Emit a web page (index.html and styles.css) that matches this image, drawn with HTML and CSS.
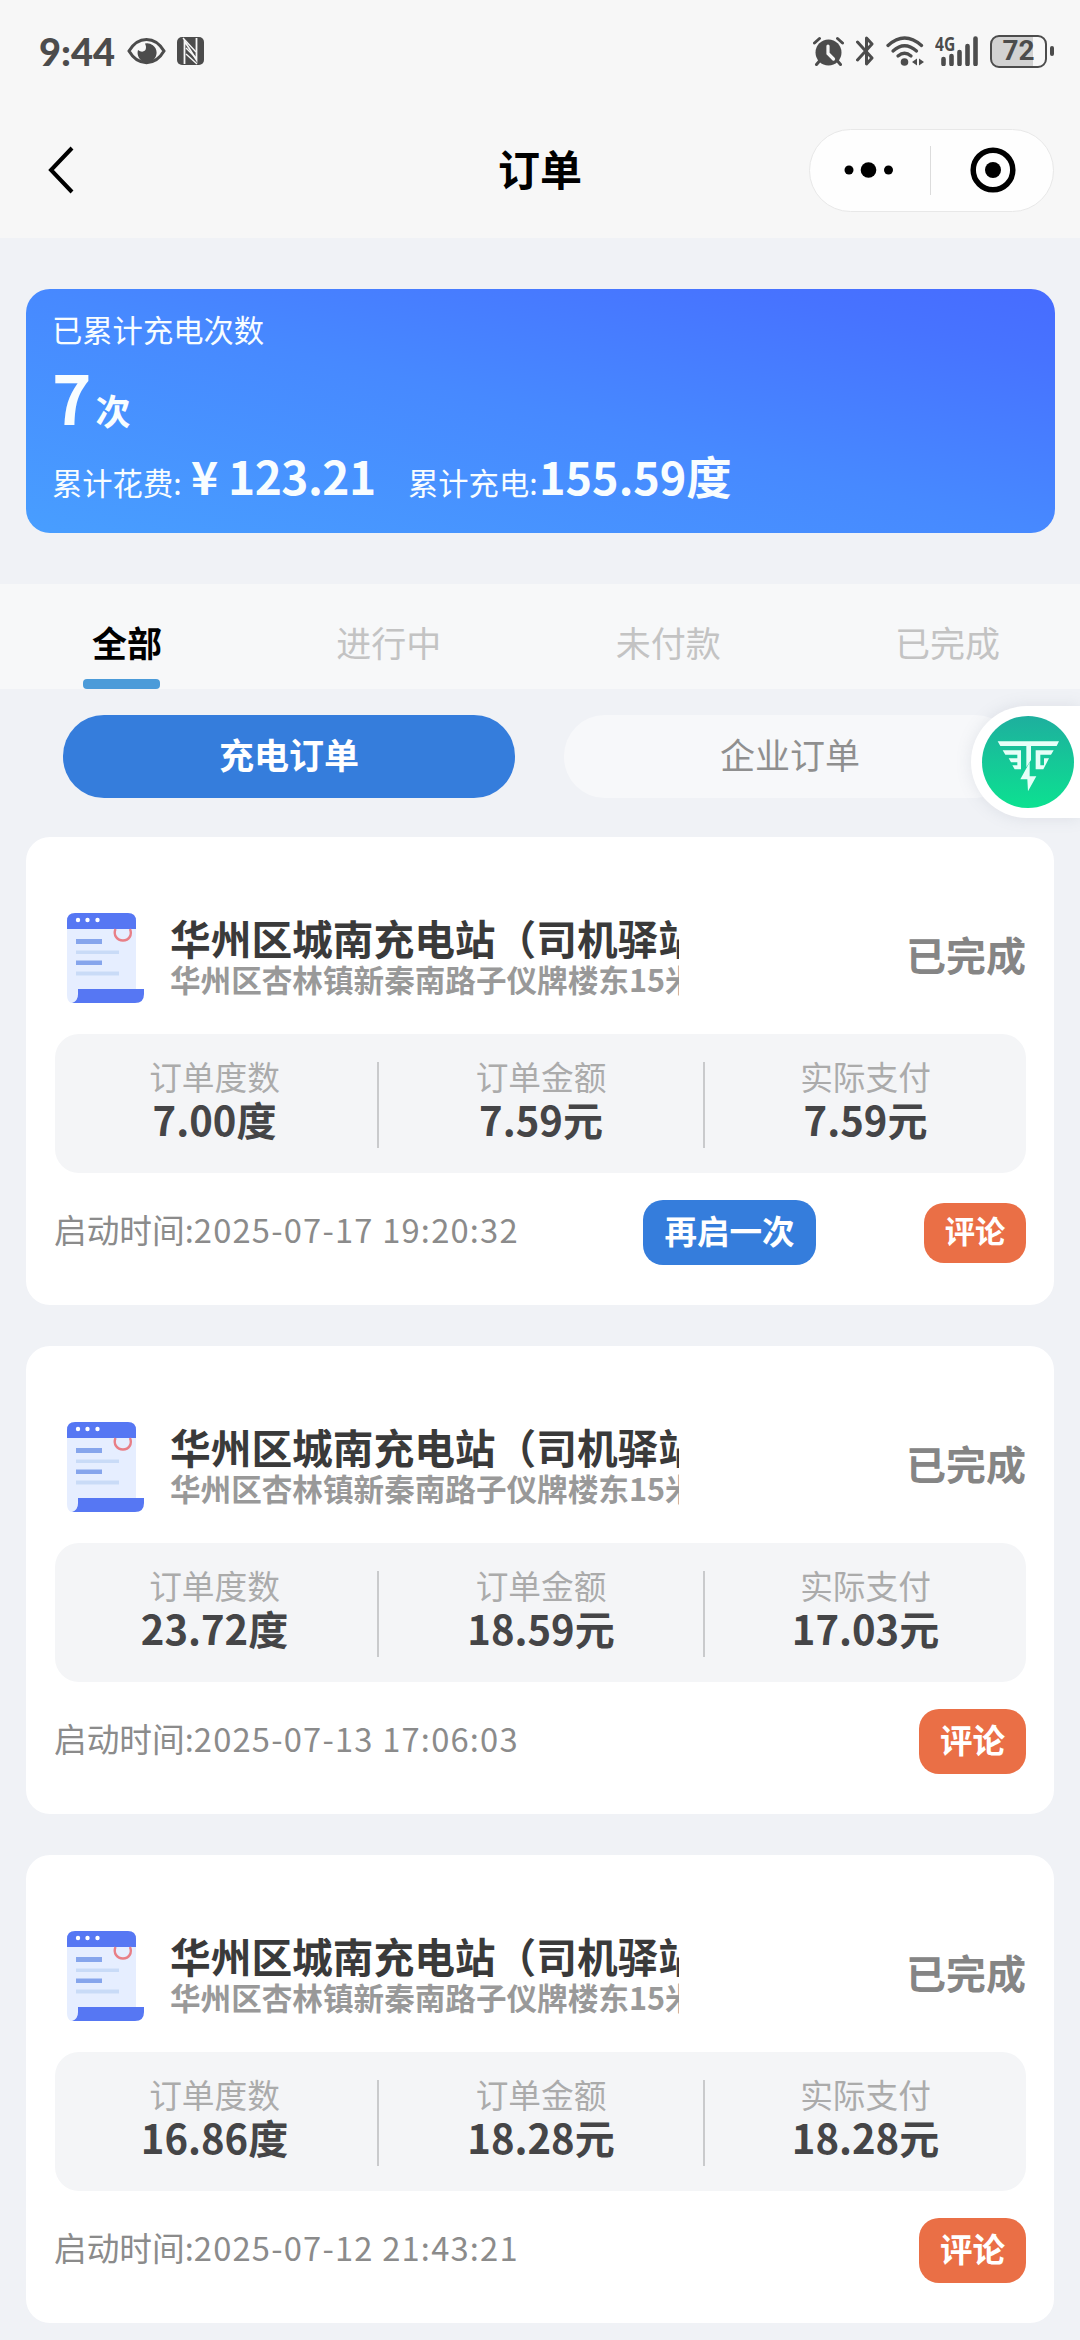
FILE: index.html
```html
<!DOCTYPE html>
<html lang="zh-CN">
<head>
<meta charset="utf-8">
<title>订单</title>
<link rel="stylesheet" href="styles.css">
</head>
<body>
<svg class="defs" aria-hidden="true">
  <symbol id="order-icon" viewBox="0 0 77 90">
    <path d="M0 14H69V78H11Q11 90 4 90Q0 88 0 82Z" fill="#e6eeff"/>
    <path d="M8 0H61Q69 0 69 8V16H0V8Q0 0 8 0Z" fill="#5677f3"/>
    <circle cx="11" cy="7" r="2.2" fill="#fff"/><circle cx="20.500" cy="7" r="2.200" fill="#fff"/><circle cx="30.500" cy="7" r="2.200" fill="#fff"/>
    <path d="M48.500 16C46 22 50 27.500 56 27.500S65.500 22 63 16" fill="none" stroke="#e87f87" stroke-width="2.400"/>
    <path d="M9 26H35V31H9ZM9 47.500H35V52H9Z" fill="#86a5ec"/>
    <path d="M9 37.500H52V41H9ZM9 58.500H52V62.500H9Z" fill="#c9dbf7"/>
    <path d="M11 76H77V81Q77 90 68 90H5Q11 88 11 81Z" fill="#5677f3"/>
  </symbol>
</svg>

<header class="header">
  <div class="status">
    <div class="status-left">
      <span class="time">9:44</span>
      <svg class="eye" viewBox="0 0 39 28"><path d="M2 14C11 -1.500 28 -1.500 37 14C28 29.500 11 29.500 2 14Z" fill="none" stroke="#4c4c4c" stroke-width="3"/><path d="M18 6.500A9.500 9.500 0 1 1 11 13Q15 16 18 13.500Q20 11 18 6.500Z" fill="#4c4c4c"/></svg>
      <svg class="nfc" viewBox="0 0 28 28"><rect width="27" height="28" rx="5" fill="#4c4c4c"/><path d="M7.500 27V4L19.500 23V1" fill="none" stroke="#f7f7f7" stroke-width="1.800"/><path d="M6 1L19 15M9 11L19 21M9 17L20 27" stroke="#f7f7f7" stroke-width="1.400"/></svg>
    </div>
    <div class="status-right">
      <svg class="alarm" viewBox="0 0 31 30"><circle cx="15.500" cy="16.500" r="13" fill="#4c4c4c"/><path d="M1.500 7L6.500 2.500M29.500 7L24.500 2.500M6.500 25L3.500 28.500M24.500 25L27.500 28.500" stroke="#4c4c4c" stroke-width="3" stroke-linecap="round"/><path d="M15 10V17.500L20.500 23" fill="none" stroke="#f7f7f7" stroke-width="3.200" stroke-linecap="round"/></svg>
      <svg class="bt" viewBox="0 0 18 30"><path d="M1.500 6L16 22L10.500 28V2L16 8L1.500 24" fill="none" stroke="#4c4c4c" stroke-width="3" stroke-linecap="round" stroke-linejoin="round"/></svg>
      <svg class="wifi" viewBox="0 0 38 30"><g fill="none" stroke="#4c4c4c" stroke-width="3.300" stroke-linecap="round"><path d="M2 9.500Q18.500 -5.500 35.500 9.500"/><path d="M7 15Q18.500 4.500 30.500 15"/><path d="M12 20Q18.500 14.500 25 20"/></g><circle cx="18.500" cy="26" r="3.800" fill="#4c4c4c"/><path d="M26 26L31 22.500V29.500ZM38 26L33 22.500V29.500Z" fill="#4c4c4c"/></svg>
      <span class="signal"><span class="net">4G</span><svg viewBox="0 0 40 30"><path d="M4.500 23V28M12.500 20V28M20.500 16V28M28.500 10V28M36.500 2.500V28" stroke="#4c4c4c" stroke-width="4.600" stroke-linecap="round"/></svg></span>
      <span class="battery"><span class="level">72</span><i class="nub"></i></span>
    </div>
  </div>
  <nav class="nav">
    <svg class="back" viewBox="0 0 26 48"><path d="M24 2L3 24L24 46" fill="none" stroke="#000" stroke-width="4"/></svg>
    <h1 class="title">订单</h1>
    <div class="capsule">
      <svg class="dots" viewBox="0 0 50 16"><circle cx="5" cy="8" r="4.500"/><circle cx="24.500" cy="8" r="7.800"/><circle cx="44.500" cy="8" r="4.500"/></svg>
      <i class="bar"></i>
      <svg class="target" viewBox="0 0 46 46"><circle cx="23" cy="23" r="19.800" fill="none" stroke="#000" stroke-width="5.500"/><circle cx="23" cy="23" r="8"/></svg>
    </div>
  </nav>
</header>

<section class="summary">
  <p class="s-label">已累计充电次数</p>
  <p class="s-count">7<span>次</span></p>
  <p class="s-totals"><span class="s-key">累计花费:</span><b class="s-yen">¥</b><b class="s-cost">123.21</b><span class="s-key">累计充电:</span><b class="s-power">155.59度</b></p>
</section>

<div class="tabs">
  <span class="tab active">全部</span><span class="tab">进行中</span><span class="tab">未付款</span><span class="tab">已完成</span>
</div>

<div class="types">
  <span class="type on">充电订单</span><span class="type">企业订单</span>
  <div class="float">
    <svg viewBox="0 0 276 276">
      <defs><linearGradient id="g" x1="0" y1="0" x2="0" y2="1"><stop offset="0" stop-color="#1eaf9e"/><stop offset="1" stop-color="#0ce191"/></linearGradient></defs>
      <circle cx="138" cy="138" r="138" fill="url(#g)"/>
      <g fill="#e6fff8"><path d="M47 76H231L224 90H147V132L133 154V90H55Z"/><path d="M62 103H117V160H98L91 148H106V139H87L80 127H106V116H70Z"/><path d="M161 103H215L207 116H175V148H186V127H201L184 160H161Z"/><path d="M143 139L115 190H136L138 226L163 181H143Z"/></g>
    </svg>
  </div>
</div>

<main class="orders">
  <article class="card">
    <div class="top">
      <svg class="doc"><use href="#order-icon"/></svg>
      <div class="place"><h2>华州区城南充电站（司机驿站）</h2><p>华州区杏林镇新秦南路子仪牌楼东15米</p></div>
      <span class="state">已完成</span>
    </div>
    <div class="stats">
      <div class="stat"><span>订单度数</span><b>7.00度</b></div>
      <div class="stat"><span>订单金额</span><b>7.59元</b></div>
      <div class="stat"><span>实际支付</span><b>7.59元</b></div>
    </div>
    <div class="foot"><span class="start">启动时间:<time>2025-07-17 19:20:32</time></span><span class="btn again">再启一次</span><span class="btn review small">评论</span></div>
  </article>
  <article class="card">
    <div class="top">
      <svg class="doc"><use href="#order-icon"/></svg>
      <div class="place"><h2>华州区城南充电站（司机驿站）</h2><p>华州区杏林镇新秦南路子仪牌楼东15米</p></div>
      <span class="state">已完成</span>
    </div>
    <div class="stats">
      <div class="stat"><span>订单度数</span><b>23.72度</b></div>
      <div class="stat"><span>订单金额</span><b>18.59元</b></div>
      <div class="stat"><span>实际支付</span><b>17.03元</b></div>
    </div>
    <div class="foot"><span class="start">启动时间:<time>2025-07-13 17:06:03</time></span><span class="btn review">评论</span></div>
  </article>
  <article class="card">
    <div class="top">
      <svg class="doc"><use href="#order-icon"/></svg>
      <div class="place"><h2>华州区城南充电站（司机驿站）</h2><p>华州区杏林镇新秦南路子仪牌楼东15米</p></div>
      <span class="state">已完成</span>
    </div>
    <div class="stats">
      <div class="stat"><span>订单度数</span><b>16.86度</b></div>
      <div class="stat"><span>订单金额</span><b>18.28元</b></div>
      <div class="stat"><span>实际支付</span><b>18.28元</b></div>
    </div>
    <div class="foot"><span class="start">启动时间:<time>2025-07-12 21:43:21</time></span><span class="btn review">评论</span></div>
  </article>
</main>
</body>
</html>
```
FILE: styles.css
```css
* { box-sizing: border-box; margin: 0; padding: 0; }
body {
  width: 1080px;
  height: 2340px;
  overflow: hidden;
  background: #f0f2f6;
  font-family: "Noto Sans CJK SC", sans-serif;
}
svg { display: block; flex: none; }
.defs { position: absolute; width: 0; height: 0; }

/* Header */
.header { height: 238px; background: #f7f7f7; }
.status {
  height: 102px;
  padding: 0 26px 0 39px;
  display: flex;
  justify-content: space-between;
  align-items: center;
  color: #4c4c4c;
}
.status-left, .status-right { display: flex; align-items: center; }
.time { width: 88px; font: 900 38px/44px Lato, sans-serif; letter-spacing: 0; }
.eye { width: 39px; height: 28px; margin-right: 11px; }
.nfc { width: 28px; height: 28px; }
.alarm { width: 31px; height: 30px; margin-right: 12px; }
.bt { width: 18px; height: 30px; margin-right: 12px; }
.wifi { width: 38px; height: 30px; margin-right: 11px; }
.signal { display: flex; position: relative; width: 44px; margin-right: 11px; justify-content: flex-end; }
.signal svg { width: 40px; height: 30px; }
.net { position: absolute; left: 0; top: -2px; font: 700 19px/20px "Open Sans", sans-serif; transform: scaleX(.82); transform-origin: left; }
.battery { display: flex; align-items: center; gap: 3px; }
.level {
  width: 57px;
  height: 33px;
  border: 2px solid #4c4c4c;
  border-radius: 9px;
  background: linear-gradient(90deg, #d2d2d2 78%, #f7f7f7 78%);
  font: 700 28px/28px Roboto, sans-serif;
  text-align: center;
}
.nub { width: 4px; height: 10px; border-radius: 2px; background: #4c4c4c; }

.nav { height: 136px; display: grid; grid-template-columns: 1fr auto 1fr; align-items: center; padding: 0 26px 0 48px; }
.back { width: 26px; height: 48px; }
.title { font-size: 42px; line-height: 60px; font-weight: 700; margin-left: -22px; transform: translateY(-2px); }
.capsule {
  justify-self: end;
  width: 245px;
  height: 83px;
  border: 1px solid #e8e8e8;
  border-radius: 42px;
  background: #fefefe;
  display: flex;
  align-items: center;
}
.dots { width: 50px; height: 16px; margin: 0 36px 0 34px; }
.bar { width: 1px; height: 49px; background: #dcdcdc; }
.target { width: 46px; height: 46px; margin-left: 39px; }

/* Summary */
.summary {
  height: 244px;
  margin: 51px 25px 0 26px;
  padding: 19px 26px;
  border-radius: 24px;
  background: linear-gradient(to top right, #489eff 0%, #4789ff 50%, #4773ff 85%, #476cff 100%);
  color: #f8fdff;
}
.s-label { font-size: 30.300px; line-height: 42px; }
.s-count { font-size: 67px; line-height: 92px; font-weight: 700; }
.s-count span { font-size: 35px; margin-left: 4px; }
.s-totals { display: flex; align-items: baseline; margin-top: -14px; font-size: 46px; line-height: 66px; }
.s-key { font-size: 30.300px; width: 139px; white-space: nowrap; }
.s-yen { width: 37px; }
.s-cost { width: 180px; letter-spacing: -0.5px; }
.s-cost + .s-key { width: 131px; }
.s-power { white-space: nowrap; font-size: 45px; }

/* Tabs */
.tabs {
  height: 105px;
  margin-top: 51px;
  padding: 0 80px 0 92px;
  display: flex;
  justify-content: space-between;
  background: #f7f8f9;
}
.tab { position: relative; font-size: 35px; line-height: 116px; color: #c3c3c3; }
.active { color: #000; font-weight: 700; }
.active::after { content: ""; position: absolute; left: -9px; bottom: 0; width: 77px; height: 10px; border-radius: 4px; background: #4b9bd9; }

.types { position: relative; height: 83px; margin: 26px 64px 0 63px; display: flex; gap: 49px; }
.type { flex: 1; border-radius: 41px; background: #f7f8fa; color: #8f8f8f; font-size: 35px; line-height: 78px; text-align: center; }
.on { background: #357ddc; color: #fff; font-weight: 700; }
.float {
  position: absolute;
  right: -64px;
  top: -9px;
  width: 109px;
  height: 112px;
  padding: 10px 11px;
  border-radius: 56px 0 0 56px;
  background: #fff;
  box-shadow: 0 0 16px rgba(120, 130, 150, .16);
}
.float svg { width: 92px; height: 92px; }

/* Orders */
.orders { margin: 39px 26px 0; display: flex; flex-direction: column; gap: 41px; }
.card { height: 468px; padding: 76px 28px 0 29px; border-radius: 24px; background: #fff; }
.top { display: flex; height: 121px; }
.doc { width: 77px; height: 90px; margin: 0 26px 0 12px; }
.place { width: 509px; padding-top: 1px; overflow: hidden; white-space: nowrap; }
.place h2 { font-size: 40.700px; line-height: 48px; font-weight: 700; color: #3a3a3a; }
.place p { font-size: 30.600px; line-height: 38px; font-weight: 700; color: #999; margin-top: -2px; }
.state { margin-left: auto; font-size: 40px; line-height: 82px; font-weight: 700; color: #858585; }
.stats { height: 139px; padding: 28px 0 30px; border-radius: 24px; background: #f4f5f7; display: grid; grid-template-columns: 322px 326px 1fr; }
.stat { display: flex; flex-direction: column; align-items: center; border-left: 2px solid #c9cacc; }
.stat:first-child { border-left: 0; padding-right: 3px; }
.stat span { font-size: 32.700px; line-height: 28px; color: #ababab; }
.stat b { font-size: 40px; line-height: 58px; color: #454547; }
.foot { height: 65px; margin-top: 27px; display: flex; align-items: center; }
.start { flex: 1; margin-left: -1px; font-size: 32.700px; line-height: 56px; color: #8b8b8b; transform: translateY(-4px); }
.start time { letter-spacing: 1.200px; }
.btn { height: 65px; border-radius: 20px; font-size: 32.500px; line-height: 59px; font-weight: 700; text-align: center; color: #fff; }
.again { width: 173px; margin-right: 108px; background: #357ddc; }
.review { width: 107px; background: #ea6f46; }
.small { width: 102px; height: 60px; font-size: 30.300px; line-height: 55px; }
```
